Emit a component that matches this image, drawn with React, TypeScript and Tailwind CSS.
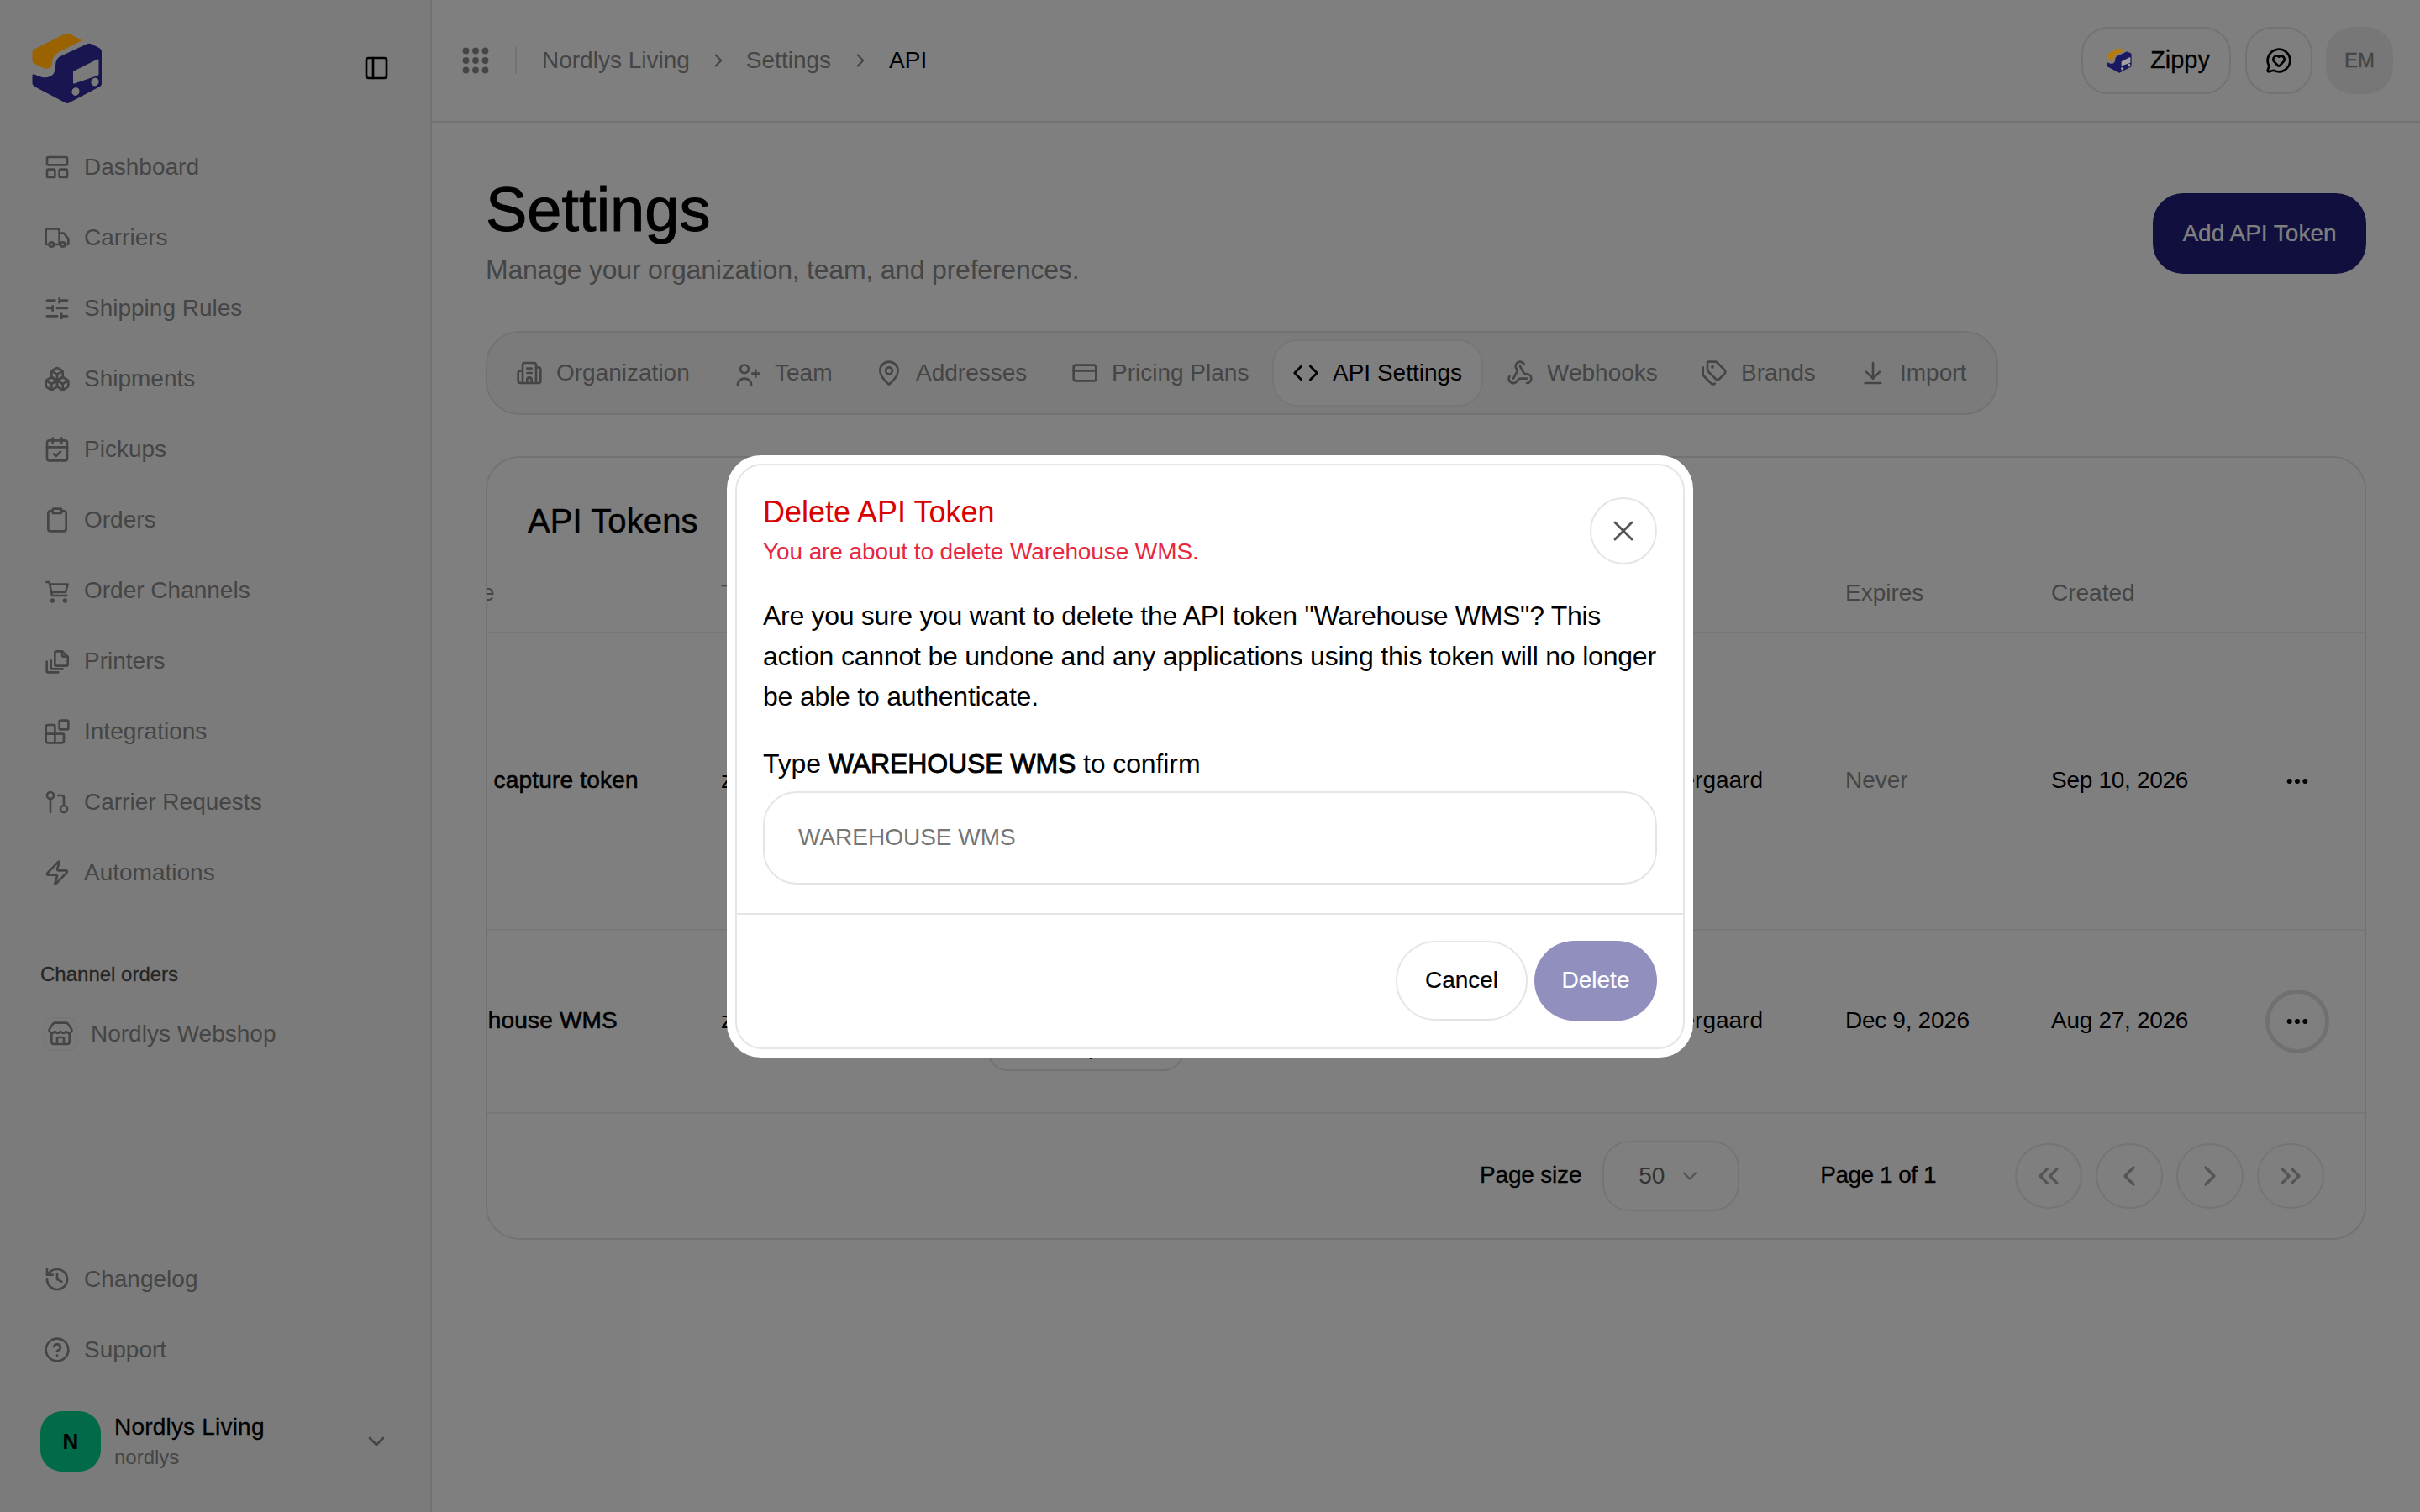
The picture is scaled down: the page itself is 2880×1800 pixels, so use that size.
import React from "react";
import {
  LayoutPanelTop, Truck, SlidersHorizontal, Boxes, CalendarCheck, Clipboard, Blocks,
  GitPullRequest, Zap, Store, History, CircleHelp, ChevronDown, ChevronRight, ChevronLeft, ChevronsLeft, ChevronsRight,
  PanelLeft, MessageCircleHeart, Building2, MapPin, CreditCard, Code, Webhook, Tags, ArrowDownToLine,
  Ellipsis, X,
} from "lucide-react";

type IconProps = { size?: number; strokeWidth?: number; className?: string };

function CartIcon({ size = 32, strokeWidth = 2, className }: IconProps) {
  return (
    <svg width={size} height={size} viewBox="0 0 24 24" fill="none" stroke="currentColor" strokeWidth={strokeWidth} strokeLinecap="round" strokeLinejoin="round" className={className}>
      <path d="M2.5 4.5H5L7.5 16.5H20.5" />
      <path d="M5.4 6.5H21.5L19.5 13.5H6.9" />
      <circle cx="7.75" cy="21" r="1" fill="currentColor" />
      <circle cx="19" cy="21" r="1" fill="currentColor" />
    </svg>
  );
}

function PagesIcon({ size = 32, strokeWidth = 2, className }: IconProps) {
  return (
    <svg width={size} height={size} viewBox="0 0 24 24" fill="none" stroke="currentColor" strokeWidth={strokeWidth} strokeLinecap="round" strokeLinejoin="round" className={className}>
      <path d="M12 3.25h4.5l5 5v6.5a1.5 1.5 0 0 1-1.5 1.5h-8.5a1.5 1.5 0 0 1-1.5-1.5V4.75a1.5 1.5 0 0 1 1.5-1.5z" />
      <path d="M16.5 3.25V7a1 1 0 0 0 1 1h4" />
      <path d="M6.5 11.5v6.5a1 1 0 0 0 1 1H17" />
      <path d="M2.75 12.5V21a1 1 0 0 0 1 1H13" />
    </svg>
  );
}

function TeamIcon({ size = 32, strokeWidth = 2, className }: IconProps) {
  return (
    <svg width={size} height={size} viewBox="0 0 24 24" fill="none" stroke="currentColor" strokeWidth={strokeWidth} strokeLinecap="round" strokeLinejoin="round" className={className}>
      <circle cx="9" cy="8.5" r="3.6" />
      <path d="M3 23v-1a6 5 0 0 1 12 0v1" />
      <path d="M19 9.5v6" />
      <path d="M16 12.5h6" />
    </svg>
  );
}

function Logo({ size, orange, navy, hole }: { size: number; orange: string; navy: string; hole: string }) {
  return (
    <svg width={size} height={size} viewBox="37 37 85 85" className="relative z-10 shrink-0">
      <path d="M77 38.5 Q80 37 83 38.5 L95 44.5 Q98 46.5 95 47.5 L72 59 Q62 64 62 72 Q62 81 53 79.5 L41 74 Q38.5 72.5 38.5 70 V60 Q38.5 57.5 41 56.5 Z" fill={orange} />
      <path d="M103 50.5 Q106 49 109 50.5 L118 55 Q121 56.5 121 60 V97 Q121 100 118 101.5 L83 120 Q80 122 77 120 L41 101 Q38.5 99.5 38.5 97 V88 Q38.5 85.5 41 86.5 L50 90 Q66 92 66 76 Q66 68 72 65 Z" fill={navy} />
      <path d="M87 83 L116 68.5 Q117.5 68 117.5 69.5 V86 Q117.5 87.5 116 88 L88.5 97.5 Q87 98 87 96.5 Z" fill={hole} />
      <ellipse cx="90" cy="107" rx="4.5" ry="5" transform="rotate(25 90 107)" fill={hole} />
      <ellipse cx="113" cy="95.5" rx="4.5" ry="5" transform="rotate(25 113 95.5)" fill={hole} />
    </svg>
  );
}

const topNav = [
  [LayoutPanelTop, "Dashboard"],
  [Truck, "Carriers"],
  [SlidersHorizontal, "Shipping Rules"],
  [Boxes, "Shipments"],
  [CalendarCheck, "Pickups"],
  [Clipboard, "Orders"],
  [CartIcon, "Order Channels"],
  [PagesIcon, "Printers"],
  [Blocks, "Integrations"],
  [GitPullRequest, "Carrier Requests"],
  [Zap, "Automations"],
] as const;

const tabs = [
  [Building2, "Organization", "w-[256px]"],
  [TeamIcon, "Team", "w-[164px]"],
  [MapPin, "Addresses", "w-[229px]"],
  [CreditCard, "Pricing Plans", "w-[259px]"],
  [Code, "API Settings", "w-[251px]"],
  [Webhook, "Webhooks", "w-[227px]"],
  [Tags, "Brands", "w-[185px]"],
  [ArrowDownToLine, "Import", "w-[178px]"],
] as const;

function NavItem({ icon: Icon, label }: { icon: React.ElementType; label: string }) {
  return (
    <div className="flex h-[80px] items-center gap-[16px] pl-[28px] text-[28px] text-[#8a8a8a]">
      <Icon size={32} strokeWidth={2} className="shrink-0" />
      <span>{label}</span>
    </div>
  );
}

function Pill({ children }: { children: React.ReactNode }) {
  return (
    <div className="flex h-[54px] w-[234px] items-center justify-center rounded-[24px] border-2 border-[#e5e5e5] text-[24px] text-[#1a1a1a]">
      {children}
    </div>
  );
}

function PageButton({ icon: Icon }: { icon: React.ElementType }) {
  return (
    <div className="flex h-[78px] w-[80px] items-center justify-center rounded-full border-2 border-[#e8e8e8] text-[#aaaaaa]">
      <Icon size={40} strokeWidth={2} />
    </div>
  );
}

export default function App() {
  return (
    <div className="relative flex h-[1800px] w-[2880px] overflow-hidden bg-white font-['Liberation_Sans',Arial,sans-serif] text-black">
      <aside className="flex h-full w-[514px] shrink-0 flex-col border-r-2 border-[#e5e5e5] bg-[#f7f7f7] pb-[48px]">
        <div className="flex h-[146px] shrink-0 items-center justify-between pl-[37px] pr-[48px] pt-[16px]">
          <Logo size={85} orange="#9a6300" navy="#181550" hole="#7b7b7b" />
          <PanelLeft size={32} strokeWidth={2} />
        </div>
        <nav className="mt-[13px] flex flex-col gap-[4px] pl-[24px]">
          {topNav.map(([icon, label]) => (
            <NavItem key={label} icon={icon} label={label} />
          ))}
        </nav>
        <div className="mt-[65px] pl-[48px] text-[24px] leading-[32px] text-[#4a4a4a] [-webkit-text-stroke:0.3px]">Channel orders</div>
        <div className="mt-[23px] flex h-[64px] items-center gap-[16px] pl-[52px] text-[28px] text-[#8a8a8a]">
          <div className="flex h-[40px] w-[40px] items-center justify-center rounded-[10px] border-2 border-[#ededed]">
            <Store size={32} strokeWidth={2} />
          </div>
          <span>Nordlys Webshop</span>
        </div>
        <div className="flex-1" />
        <div className="flex flex-col gap-[4px] pl-[24px]">
          <NavItem icon={History} label="Changelog" />
          <NavItem icon={CircleHelp} label="Support" />
        </div>
        <div className="mt-[33px] flex items-center pl-[48px] pr-[48px]">
          <div className="flex h-[72px] w-[72px] shrink-0 items-center justify-center rounded-[26px] bg-[#00d492] text-[26px] font-bold">N</div>
          <div className="ml-[16px] flex flex-col">
            <span className="text-[28px] leading-[38px] tracking-[0.2px] [-webkit-text-stroke:0.3px]">Nordlys Living</span>
            <span className="text-[24px] leading-[34px] text-[#8a8a8a]">nordlys</span>
          </div>
          <div className="flex-1" />
          <ChevronDown size={32} className="text-[#8a8a8a]" />
        </div>
      </aside>

      <main className="flex min-w-0 flex-1 flex-col">
        <header className="flex h-[146px] shrink-0 items-center border-b-2 border-[#e5e5e5] pl-[36px] pr-[32px]">
          <svg width="32" height="32" viewBox="0 0 32 32" className="shrink-0 fill-[#8a8a8a]">
            {[4.5, 16, 27.5].map((y) => [4.5, 16, 27.5].map((x) => <circle key={`${x}-${y}`} cx={x} cy={y} r={3.9} />))}
          </svg>
          <div className="ml-[31px] h-[32px] w-[2px] bg-[#e5e5e5]" />
          <div className="ml-[30px] flex items-center text-[28px] text-[#8a8a8a]">
            <span>Nordlys Living</span>
            <ChevronRight size={26} className="ml-[21px] mr-[20px]" />
            <span>Settings</span>
            <ChevronRight size={26} className="ml-[22px] mr-[21px]" />
            <span className="text-black">API</span>
          </div>
          <div className="flex-1" />
          <div className="flex h-[80px] w-[178px] items-center rounded-[32px] border-2 border-[#e5e5e5] pl-[28px] text-[29px]">
            <Logo size={30} orange="#b57a10" navy="#1b1862" hole="#a0a0a0" />
            <span className="ml-[22px] [-webkit-text-stroke:0.3px]">Zippy</span>
          </div>
          <div className="ml-[17px] flex h-[80px] w-[80px] items-center justify-center rounded-[32px] border-2 border-[#e5e5e5]">
            <MessageCircleHeart size={32} strokeWidth={2} />
          </div>
          <div className="ml-[16px] flex h-[80px] w-[80px] items-center justify-center rounded-[32px] bg-[#eeeeee] text-[24px] text-[#8a8a8a] [-webkit-text-stroke:0.3px]">EM</div>
        </header>

        <div className="flex flex-col px-[64px]">
          <div className="flex items-start justify-between">
            <div className="flex flex-col pt-[64px]">
              <h1 className="text-[74px] leading-[80px] [-webkit-text-stroke:1px]">Settings</h1>
              <p className="mt-[9px] text-[32px] leading-[44px] tracking-[-0.22px] text-[#8a8a8a]">Manage your organization, team, and preferences.</p>
            </div>
            <div className="mt-[84px] flex h-[96px] w-[254px] items-center justify-center rounded-[36px] bg-[#221f7c] text-[28px] text-white [-webkit-text-stroke:0.2px]">Add API Token</div>
          </div>

          <div className="mt-[51px] flex h-[100px] w-[1800px] items-center gap-[4px] rounded-[40px] border-2 border-[#e5e5e5] bg-[#f7f7f7] pl-[10px]">
            {tabs.map(([Icon, label, w]) => {
              const active = label === "API Settings";
              return (
                <div
                  key={label}
                  className={`flex h-[80px] items-center gap-[16px] rounded-[30px] border-2 pl-[22px] text-[28px] ${w} ${active ? "border-[#ececec] bg-white text-black" : "border-transparent text-[#8a8a8a]"}`}
                >
                  <Icon size={32} strokeWidth={2} className="shrink-0" />
                  <span className="whitespace-nowrap">{label}</span>
                </div>
              );
            })}
          </div>

          <section className="mt-[49px] flex h-[933px] flex-col overflow-hidden rounded-[40px] border-2 border-[#e5e5e5]">
            <h2 className="h-[115px] shrink-0 pl-[48px] pt-[53px] text-[40px] leading-[44px] tracking-[0.1px] [-webkit-text-stroke:0.5px]">API Tokens</h2>

            <div className="flex h-[94px] shrink-0 items-center border-b-2 border-[#efefef] text-[28px] text-[#8a8a8a]">
              <div className="-ml-[66px] flex items-center">
                <span className="w-[344px]">Name</span>
                <span className="w-[317px]">Token</span>
                <span className="w-[500px]">Scopes</span>
                <span className="w-[521px]">Created by</span>
                <span className="w-[245px]">Expires</span>
                <span>Created</span>
              </div>
            </div>

            <div className="flex h-[354px] shrink-0 items-center border-b-2 border-[#efefef] text-[28px]">
              <div className="-ml-[66px] flex items-center">
                <span className="-ml-[4px] w-[348px] whitespace-nowrap pb-[2px] tracking-[0.2px] [-webkit-text-stroke:0.6px]">Label capture token</span>
                <span className="w-[317px] pb-[2px]">zpy_4b1c…e07a</span>
                <div className="flex w-[500px] flex-col gap-[10px]">
                  <Pill>read:orders</Pill>
                  <Pill>write:orders</Pill>
                  <Pill>read:shipments</Pill>
                  <Pill>write:shipments</Pill>
                  <Pill>read:labels</Pill>
                </div>
                <span className="w-[423px] pb-[2px] text-right">Emma Søndergaard</span>
                <span className="ml-[98px] w-[245px] pb-[2px] text-[#8a8a8a]">Never</span>
                <span className="w-[255px] pb-[2px] tracking-[-0.3px]">Sep 10, 2026</span>
                <div className="flex h-[76px] w-[76px] items-center justify-center">
                  <Ellipsis size={32} strokeWidth={2.5} />
                </div>
              </div>
            </div>

            <div className="flex h-[218px] shrink-0 items-center border-b-2 border-[#efefef] text-[28px]">
              <div className="-ml-[66px] flex items-center">
                <span className="w-[344px] whitespace-nowrap pb-[2px] tracking-[0.2px] [-webkit-text-stroke:0.6px]">Warehouse WMS</span>
                <span className="w-[317px] pb-[2px]">zpy_9ad2…71fc</span>
                <div className="flex w-[500px] flex-col gap-[10px]">
                  <Pill>read:orders</Pill>
                  <Pill>read:shipments</Pill>
                </div>
                <span className="w-[423px] pb-[2px] text-right">Emma Søndergaard</span>
                <span className="ml-[98px] w-[245px] pb-[2px] tracking-[-0.3px]">Dec 9, 2026</span>
                <span className="w-[255px] pb-[2px] tracking-[-0.3px]">Aug 27, 2026</span>
                <div className="flex h-[76px] w-[76px] items-center justify-center rounded-full border-[5px] border-[#e0e0e0]">
                  <Ellipsis size={32} strokeWidth={2.5} />
                </div>
              </div>
            </div>

            <div className="flex flex-1 items-center justify-end pr-[48px] text-[28px]">
              <span className="pb-[2px] tracking-[-0.2px] [-webkit-text-stroke:0.3px]">Page size</span>
              <div className="ml-[25px] flex h-[84px] w-[163px] items-center rounded-[32px] border-2 border-[#e8e8e8] pl-[41px] text-[#666666]">
                <span>50</span>
                <ChevronDown size={28} className="ml-[16px] text-[#aaaaaa]" />
              </div>
              <span className="ml-[96px] pb-[2px] tracking-[-0.5px] [-webkit-text-stroke:0.3px]">Page 1 of 1</span>
              <div className="ml-[94px] flex gap-[16px]">
                <PageButton icon={ChevronsLeft} />
                <PageButton icon={ChevronLeft} />
                <PageButton icon={ChevronRight} />
                <PageButton icon={ChevronsRight} />
              </div>
            </div>
          </section>
        </div>
      </main>

      <div className="absolute inset-0 flex items-center justify-center bg-black/50">
        <div className="h-[717px] w-[1150px] rounded-[40px] bg-white p-[10px]">
          <div className="flex h-full flex-col rounded-[32px] border-2 border-[#e5e5e5]">
            <div className="flex flex-col px-[31px]">
              <div className="flex items-start justify-between pt-[34px]">
                <div className="flex flex-col">
                  <h3 className="text-[36px] leading-[44px] text-[#d90000]">Delete API Token</h3>
                  <p className="mt-[7px] text-[28px] leading-[36px] tracking-[-0.1px] text-[#e7283f]">You are about to delete Warehouse WMS.</p>
                </div>
                <div className="mt-[4px] flex h-[80px] w-[80px] items-center justify-center rounded-full border-2 border-[#e5e5e5] text-[#555555]">
                  <X size={40} strokeWidth={1.75} />
                </div>
              </div>
              <p className="mt-[34px] whitespace-nowrap text-[32px] leading-[48px]">
                <span className="tracking-[-0.3px]">Are you sure you want to delete the API token "Warehouse WMS"? This</span>
                <br />
                <span className="tracking-[-0.2px]">action cannot be undone and any applications using this token will no longer</span>
                <br />
                <span className="tracking-[-0.2px]">be able to authenticate.</span>
              </p>
              <label className="mt-[34px] text-[32px] leading-[44px] tracking-[-0.1px]">
                Type <b className="font-normal [-webkit-text-stroke:0.9px]">WAREHOUSE WMS</b> to confirm
              </label>
              <input
                placeholder="WAREHOUSE WMS"
                className="mt-[11px] h-[111px] w-full rounded-[40px] border-2 border-[#e5e5e5] pl-[40px] text-[28px] outline-none placeholder:text-[#757575]"
              />
            </div>
            <div className="mt-[34px] flex flex-1 items-start justify-end gap-[8px] border-t-2 border-[#e5e5e5] pr-[31px] pt-[31px] text-[28px]">
              <div className="flex h-[95px] w-[157px] items-center justify-center rounded-[48px] border-2 border-[#e5e5e5] [-webkit-text-stroke:0.2px]">Cancel</div>
              <div className="flex h-[95px] w-[146px] items-center justify-center rounded-[48px] bg-[#908fbd] text-white [-webkit-text-stroke:0.2px]">Delete</div>
            </div>
          </div>
        </div>
      </div>
    </div>
  );
}
